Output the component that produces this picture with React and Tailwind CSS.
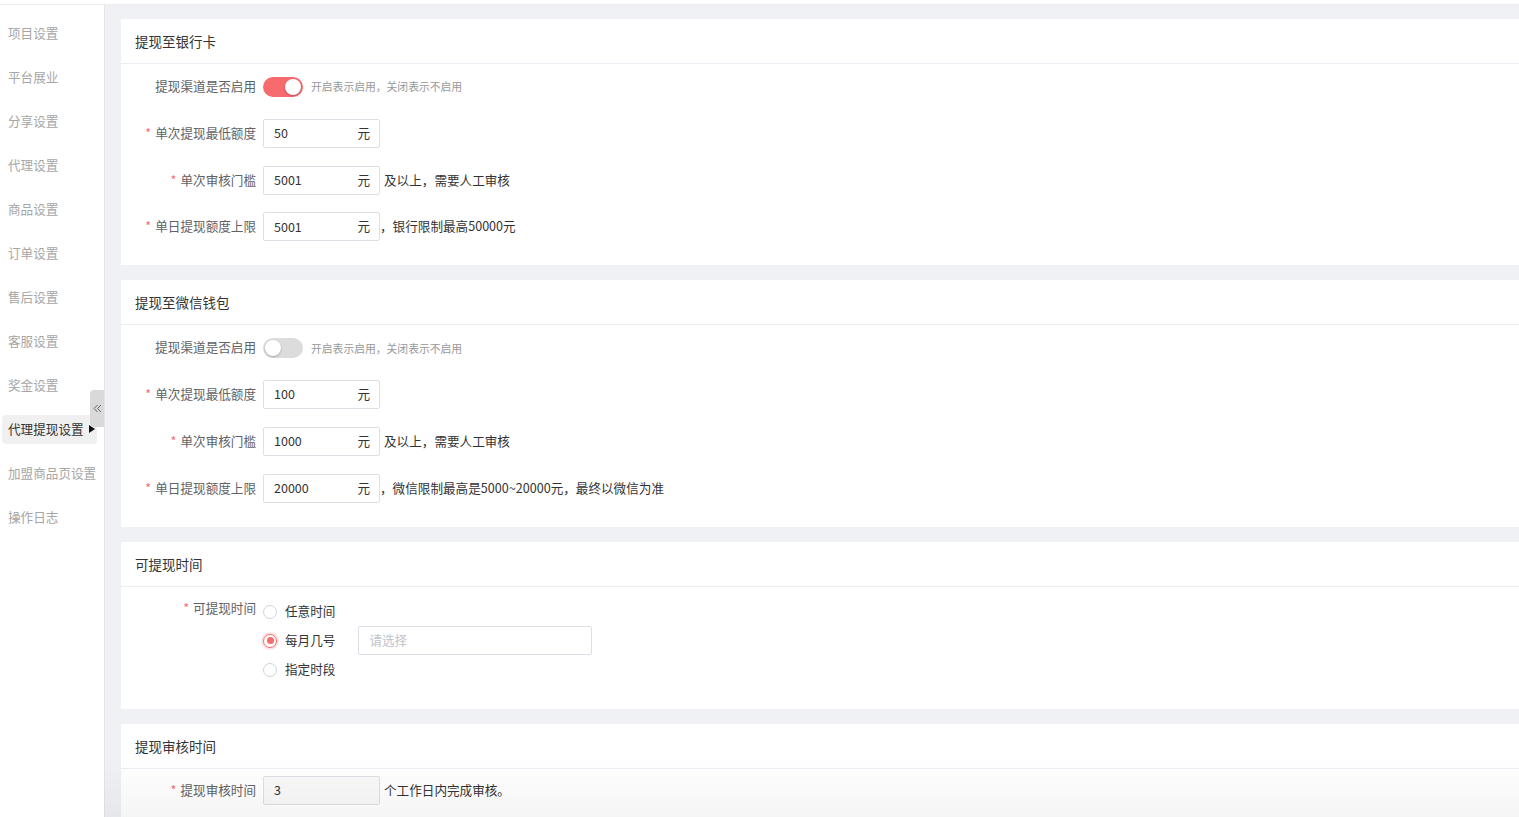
import React from 'react';

const menu = [
  '项目设置', '平台展业', '分享设置', '代理设置', '商品设置', '订单设置',
  '售后设置', '客服设置', '奖金设置', '代理提现设置', '加盟商品页设置', '操作日志',
];

const Switch = ({ on }) => (
  <div
    className={`relative w-[40px] h-[20px] rounded-full ${on ? 'bg-[#f76a6e]' : 'bg-[#dcdcdc]'}`}
  >
    <div
      className={`absolute top-[2px] w-[16px] h-[16px] rounded-full bg-white shadow-[0_1px_2px_rgba(0,0,0,0.25)] ${
        on ? 'right-[2px]' : 'left-[2px]'
      }`}
    />
  </div>
);

const Label = ({ required, children, top }) => (
  <div
    className={`w-[142px] shrink-0 pr-[7px] text-right text-[#606266] ${top ? 'leading-[22px]' : ''}`}
  >
    {required && <span className="text-[#f56c6c] mr-[4px]">*</span>}
    {children}
  </div>
);

const MoneyInput = ({ value, unit = '元', gray }) => (
  <div
    className={`w-[117px] h-[29px] border border-[#dcdfe6] rounded-[2px] flex items-center pl-[10px] pr-[9px] ${
      gray ? 'bg-[#f9f9fa]' : 'bg-white'
    }`}
  >
    <input
      defaultValue={value}
      readOnly
      className="flex-1 min-w-0 bg-transparent outline-none text-[12.5px] text-[#333]"
    />
    {unit && <span className="text-[#333]">{unit}</span>}
  </div>
);

const Row = ({ label, required, children }) => (
  <div className="flex items-center h-[29px]">
    <Label required={required}>{label}</Label>
    {children}
  </div>
);

const Card = ({ title, children, className }) => (
  <div className="bg-white mb-[15px]">
    <div className="h-[45px] border-b border-[#ebeef5] flex items-center pl-[14px] text-[13.5px] text-[#333]">
      {title}
    </div>
    <div className={className}>{children}</div>
  </div>
);

const Radio = ({ checked, label, children }) => (
  <div className="flex items-center h-[29px]">
    <div
      className={`w-[14px] h-[14px] rounded-full border flex items-center justify-center bg-white ${
        checked
          ? 'border-[#f56c6c] shadow-[0_0_0_2px_rgba(245,108,108,0.18)]'
          : 'border-[#cfd3da]'
      }`}
    >
      {checked && <div className="w-[7px] h-[7px] rounded-full bg-[#f56c6c]" />}
    </div>
    <span className="ml-[8px] text-[#333]">{label}</span>
    {children}
  </div>
);

const Channel = ({ title, on, min, audit, daily, dailyNote }) => (
  <Card title={title} className="pt-[8px] pb-[24px] flex flex-col gap-[17.8px]">
    <Row label="提现渠道是否启用">
      <Switch on={on} />
      <span className="ml-[8px] text-[10.8px] text-[#999]">开启表示启用，关闭表示不启用</span>
    </Row>
    <Row label="单次提现最低额度" required>
      <MoneyInput value={min} />
    </Row>
    <Row label="单次审核门槛" required>
      <MoneyInput value={audit} />
      <span className="ml-[4px] text-[#333]">及以上，需要人工审核</span>
    </Row>
    <Row label="单日提现额度上限" required>
      <MoneyInput value={daily} />
      <span className="ml-0 text-[#333]">{dailyNote}</span>
    </Row>
  </Card>
);

export default function App() {
  return (
    <div
      className="relative h-screen overflow-hidden flex flex-col bg-[#f0f1f5] text-[12.6px]"
      style={{ fontFamily: '"Noto Sans CJK SC", "Noto Sans", sans-serif' }}
    >
      <div className="h-[5px] shrink-0 bg-white border-b border-[#ececec]" />
      <div className="flex flex-1 min-h-0">
        {/* Sidebar */}
        <aside className="relative w-[105px] shrink-0 bg-white border-r border-[#e4e4e4] pt-[6px]">
          {menu.map((item) => {
            const active = item === '代理提现设置';
            return (
              <div key={item} className="h-[44px] flex items-center pl-[2px] pr-[7px]">
                {active ? (
                  <div className="flex-1 h-[29px] rounded-[4px] bg-[#f0f0f0] flex items-center pl-[6px] text-[#333]">
                    {item}
                    <span className="ml-[5px] w-0 h-0 border-y-[4.5px] border-y-transparent border-l-[6px] border-l-[#111]" />
                  </div>
                ) : (
                  <span className="pl-[6px] text-[#a6a6a6]">{item}</span>
                )}
              </div>
            );
          })}
          <div className="absolute right-0 top-[385px] w-[14px] h-[37px] rounded-l-[4px] bg-[#d9d9d9] flex items-center justify-center">
            <svg width="9" height="9" viewBox="0 0 9 9" fill="none" stroke="#666" strokeWidth="1">
              <path d="M4.5 1 L1 4.5 L4.5 8" />
              <path d="M8 1 L4.5 4.5 L8 8" />
            </svg>
          </div>
        </aside>

        {/* Main */}
        <main className="flex-1 min-w-0 pl-[16px] pt-[14px]">
          <Channel
            title="提现至银行卡"
            on
            min="50"
            audit="5001"
            daily="5001"
            dailyNote="，银行限制最高50000元"
          />
          <Channel
            title="提现至微信钱包"
            on={false}
            min="100"
            audit="1000"
            daily="20000"
            dailyNote="，微信限制最高是5000~20000元，最终以微信为准"
          />

          <Card title="可提现时间" className="pt-[10.5px] pb-[24.5px] flex items-start">
            <Label required top>可提现时间</Label>
            <div className="flex flex-col">
              <Radio label="任意时间" />
              <Radio checked label="每月几号">
                <div className="ml-[23px] w-[234px] h-[29px] border border-[#dcdfe6] rounded-[2px] flex items-center pl-[10px] text-[#c0c4cc]">
                  请选择
                </div>
              </Radio>
              <Radio label="指定时段" />
            </div>
          </Card>

          <Card title="提现审核时间" className="pt-[7px] pb-[24px]">
            <Row label="提现审核时间" required>
              <MoneyInput value="3" unit="" gray />
              <span className="ml-[4px] text-[#333]">个工作日内完成审核。</span>
            </Row>
          </Card>
        </main>
      </div>

      {/* bottom fade */}
      <div className="pointer-events-none absolute left-[104px] right-0 bottom-0 h-[60px] bg-gradient-to-b from-transparent to-[rgba(0,0,0,0.04)]" />
    </div>
  );
}
